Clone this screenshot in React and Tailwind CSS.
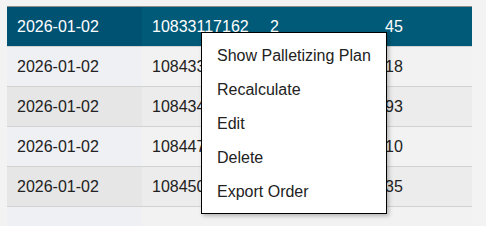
import React from 'react';

const rows = [
  { date: '2026-01-02', order: '10833117162', qty: '2', num: '45' },
  { date: '2026-01-02', order: '10843317162', qty: '1', num: '18' },
  { date: '2026-01-02', order: '10843417162', qty: '3', num: '93' },
  { date: '2026-01-02', order: '10844717162', qty: '2', num: '10' },
  { date: '2026-01-02', order: '10845017162', qty: '1', num: '35' },
  { date: '', order: '', qty: '', num: '' },
];

const menuItems = ['Show Palletizing Plan', 'Recalculate', 'Edit', 'Delete', 'Export Order'];

const App = () => {
  return (
    <div
      className="relative w-[486px] h-[226px] overflow-hidden bg-[#f3f3f3] text-[16px] text-[#222]"
      style={{ fontFamily: '"Liberation Sans", Arial, sans-serif' }}
    >
      <div className="pt-[6px] px-[7px] w-[479px]">
        <table className="w-full border-collapse table-fixed border-t border-[#8c8c8c]">
          <colgroup>
            <col className="w-[135px]" />
            <col className="w-[118px]" />
            <col className="w-[115px]" />
            <col />
          </colgroup>
          <tbody>
            {rows.map((r, i) => {
              const head = i === 0;
              const odd = i % 2 === 1;
              const first = head ? 'bg-[#005273] text-white' : odd ? 'bg-[#eff0f4]' : 'bg-[#e6e6e6]';
              const rest = head ? 'bg-[#005a78] text-white' : odd ? 'bg-[#f2f2f2]' : 'bg-[#ececec]';
              return (
                <tr key={i} className="border-b border-[#d2d2d2]">
                  <td className={`h-[40px] px-[10px] whitespace-nowrap ${first}`}>{r.date}</td>
                  <td className={`h-[40px] px-[10px] whitespace-nowrap ${rest}`}>{r.order}</td>
                  <td className={`h-[40px] px-[10px] whitespace-nowrap ${rest}`}>{r.qty}</td>
                  <td className={`h-[40px] px-[10px] whitespace-nowrap ${rest}`}>{r.num}</td>
                </tr>
              );
            })}
          </tbody>
        </table>
      </div>

      {/* context menu */}
      <div className="absolute left-[201px] top-[32px] w-[186px] bg-white border border-black pt-[6px] pb-[4px] shadow-[2px_2px_4px_rgba(0,0,0,0.25)]">
        {menuItems.map((item) => (
          <div key={item} className="h-[34px] px-[15px] flex items-center text-[#222] whitespace-nowrap">
            {item}
          </div>
        ))}
      </div>
    </div>
  );
};

export default App;
